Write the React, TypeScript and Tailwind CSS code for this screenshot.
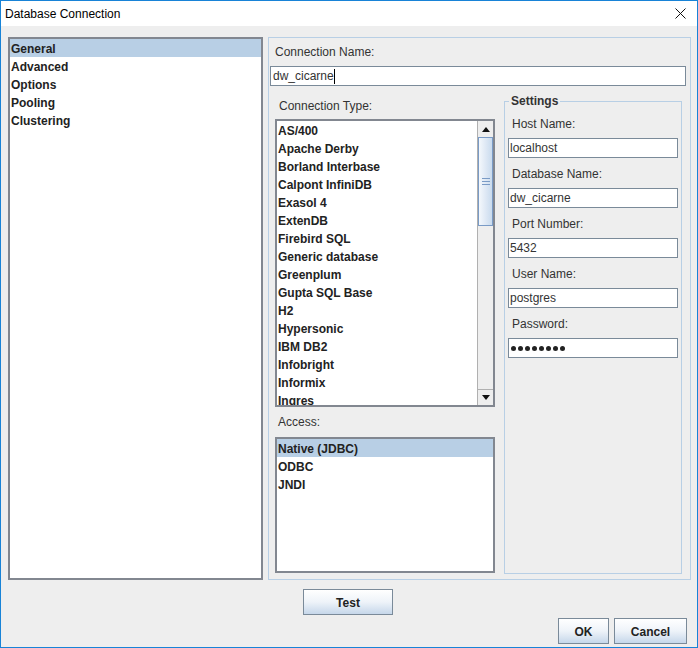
import { useState } from "react";

const SECTIONS = ["General", "Advanced", "Options", "Pooling", "Clustering"];

const CONNECTION_TYPES = [
  "AS/400",
  "Apache Derby",
  "Borland Interbase",
  "Calpont InfiniDB",
  "Exasol 4",
  "ExtenDB",
  "Firebird SQL",
  "Generic database",
  "Greenplum",
  "Gupta SQL Base",
  "H2",
  "Hypersonic",
  "IBM DB2",
  "Infobright",
  "Informix",
  "Ingres",
];

const ACCESS = ["Native (JDBC)", "ODBC", "JNDI"];

const font = "font-['Liberation_Sans',Arial,sans-serif]";

const ListRow = ({
  label,
  selected,
  onClick,
}: {
  label: string;
  selected: boolean;
  onClick: () => void;
}) => (
  <div
    onClick={onClick}
    className={`h-[18px] flex items-center pl-[1px] pt-px text-[12px] font-bold text-[#222] whitespace-nowrap cursor-default ${
      selected ? "bg-[#b8cfe5]" : ""
    }`}
  >
    {label}
  </div>
);

const Field = ({ label, value }: { label: string; value: React.ReactNode }) => (
  <div>
    <div className="h-[30px] flex items-center pl-[7px] pt-px text-[12px] text-[#333]">
      {label}
    </div>
    <div className="ml-[3px] w-[170px] h-[20px] border border-[#7a8a99] bg-white flex items-center pl-[1px] text-[12px] text-[#333]">
      {value}
    </div>
  </div>
);

const Button = ({ label, className }: { label: string; className: string }) => (
  <button
    className={`h-[26px] border border-[#7a8a99] bg-linear-to-b from-[#ffffff] via-[#eef3f9] to-[#c6d7ea] text-[12px] font-bold text-[#222] pt-px ${className}`}
  >
    {label}
  </button>
);

const Scrollbar = () => (
  <div className="w-[16px] h-full flex flex-col bg-[#eeeeee] border-l border-[#b0b0b0]">
    <div className="h-[16px] flex items-center justify-center">
      <svg width="8" height="5" viewBox="0 0 8 5">
        <path d="M0 5 L4 0 L8 5 Z" fill="#111" />
      </svg>
    </div>
    <div className="h-[89px] border border-[#7a9bc6] bg-linear-to-r from-[#f4f8fc] via-[#dfe9f5] to-[#c9dbee] flex flex-col items-center justify-center gap-[2px]">
      <div className="w-[8px] h-px bg-[#7a9bc6]" />
      <div className="w-[8px] h-px bg-[#7a9bc6]" />
      <div className="w-[8px] h-px bg-[#7a9bc6]" />
    </div>
    <div className="flex-1" />
    <div className="h-[16px] flex items-center justify-center border-t border-[#b0b0b0]">
      <svg width="8" height="5" viewBox="0 0 8 5">
        <path d="M0 0 L4 5 L8 0 Z" fill="#111" />
      </svg>
    </div>
  </div>
);

export default function App() {
  const [section, setSection] = useState("General");
  const [type, setType] = useState<string | null>(null);
  const [access, setAccess] = useState("Native (JDBC)");

  return (
    <div
      className={`w-[698px] h-[648px] border border-[#1883d7] bg-[#eeeeee] flex flex-col ${font}`}
    >
      {/* Title bar */}
      <div className="h-[25px] bg-white flex items-center justify-between pl-[4px] pr-[11px]">
        <span className="text-[12px] text-black">Database Connection</span>
        <svg width="11" height="11" viewBox="0 0 11 11">
          <path d="M0.5 0.5 L10.5 10.5 M10.5 0.5 L0.5 10.5" stroke="#111" strokeWidth="1" />
        </svg>
      </div>

      {/* Body */}
      <div className="flex pt-[11px] pl-[7px] gap-[5px]">
        {/* Section list */}
        <div className="w-[255px] h-[543px] border-2 border-[#828790] bg-white">
          {SECTIONS.map((s) => (
            <ListRow key={s} label={s} selected={section === s} onClick={() => setSection(s)} />
          ))}
        </div>

        {/* Right panel */}
        <div className="w-[423px] h-[543px] border border-[#b8cfe5] flex flex-col">
          <div className="h-[28px] flex items-center pl-[6px] text-[12px] text-[#333]">
            Connection Name:
          </div>
          <div className="ml-[1px] mr-[4px] h-[20px] border border-[#7a8a99] bg-white flex items-center pl-[2px] text-[12px] text-[#333]">
            dw_cicarne
            <span className="w-px h-[15px] bg-black" />
          </div>

          <div className="flex pt-[6px]">
            {/* Left column */}
            <div className="ml-[6px] w-[220px] flex flex-col">
              <div className="h-[27px] flex items-center pl-[4px] text-[12px] text-[#333]">
                Connection Type:
              </div>
              <div className="h-[288px] border-2 border-[#828790] bg-white flex overflow-hidden">
                <div className="flex-1 overflow-hidden">
                  {CONNECTION_TYPES.map((t) => (
                    <ListRow key={t} label={t} selected={type === t} onClick={() => setType(t)} />
                  ))}
                </div>
                <Scrollbar />
              </div>
              <div className="h-[30px] flex items-center pl-[3px] text-[12px] text-[#333]">
                Access:
              </div>
              <div className="h-[136px] border-2 border-[#828790] bg-white">
                {ACCESS.map((a) => (
                  <ListRow key={a} label={a} selected={access === a} onClick={() => setAccess(a)} />
                ))}
              </div>
            </div>

            {/* Settings */}
            <fieldset className="ml-[9px] mt-[2px] w-[178px] h-[480px] border border-[#b8cfe5]">
              <legend className="ml-[4px] px-[2px] text-[12px] leading-[14px] font-bold text-[#333]">
                Settings
              </legend>
              <Field label="Host Name:" value="localhost" />
              <Field label="Database Name:" value="dw_cicarne" />
              <Field label="Port Number:" value="5432" />
              <Field label="User Name:" value="postgres" />
              <Field
                label="Password:"
                value={
                  <div className="flex gap-[2px] pl-[1px]">
                    {Array.from({ length: 8 }).map((_, i) => (
                      <span key={i} className="w-[5px] h-[5px] rounded-full bg-[#222]" />
                    ))}
                  </div>
                }
              />
            </fieldset>
          </div>
        </div>
      </div>

      {/* Buttons */}
      <div className="mt-[9px] flex justify-center pr-[2px]">
        <Button label="Test" className="w-[90px]" />
      </div>
      <div className="mt-[3px] flex justify-end gap-[5px] pr-[10px]">
        <Button label="OK" className="w-[51px]" />
        <Button label="Cancel" className="w-[73px]" />
      </div>
    </div>
  );
}
